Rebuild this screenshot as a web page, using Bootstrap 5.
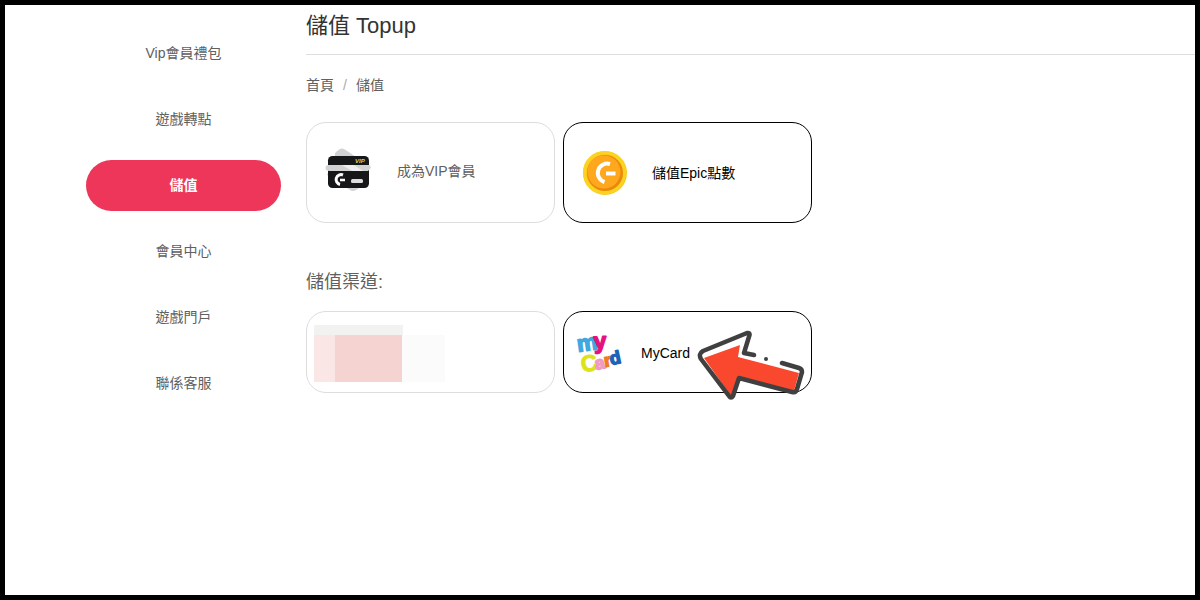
<!DOCTYPE html>
<html lang="zh-Hant">
<head>
<meta charset="utf-8">
<meta name="viewport" content="width=device-width, initial-scale=1">
<title>儲值 Topup</title>
<link href="https://cdn.jsdelivr.net/npm/bootstrap@5.3.0/dist/css/bootstrap.min.css" rel="stylesheet">
<style>
  body {
    font-family: "Liberation Sans", "Noto Sans CJK TC", sans-serif;
    font-size: 14px;
    line-height: 20px;
    color: #606060;
    border: 5px solid #000;
  }
  .page { padding-left: 81px; gap: 25px; }
  .side { width: 195px; padding-top: 23px; gap: 15px; }
  .side .nav-link {
    color: #606060;
    padding: 15px;
    height: 51px;
    line-height: 20px;
    text-align: center;
    border-radius: 26px;
  }
  .side .nav-link.active { background: #ee365a; color: #fff; font-weight: 700; }
  .page-title {
    font-size: 22px;
    line-height: 42px;
    height: 50px;
    color: #333;
    border-bottom: 1px solid #ddd;
    margin-bottom: 20px;
  }
  .breadcrumb { margin-bottom: 27px; line-height: 20px; }
  .breadcrumb a, .breadcrumb .breadcrumb-item.active { color: #606060; text-decoration: none; }
  .breadcrumb-item + .breadcrumb-item::before { color: #aaa; padding-right: 9px; }
  .breadcrumb-item + .breadcrumb-item { padding-left: 9px; }
  .options {
    display: grid;
    grid-template-columns: repeat(2, minmax(0, 1fr));
    gap: 8px;
    max-width: 506px;
  }
  .option {
    display: flex;
    align-items: center;
    position: relative;
    background: #fff;
    border: 1px solid #ddd;
    border-radius: 20px;
    color: #606060;
    padding: 0 16px;
    height: 101px;
    gap: 22px;
  }
  .option.chosen { border-color: #000; color: #000; }
  .option.channel { height: 82px; padding: 2px 12px 0; gap: 17px; }
  .option.masked { padding: 3px 7px 0; }
  .section-title { font-size: 18px; line-height: 26px; margin: 46px 0 16px; color: #606060; }
  .pointer { position: absolute; right: 1px; top: 13px; }
</style>
</head>
<body class="min-vh-100">
<div class="page d-flex">
  <nav class="side nav flex-column flex-nowrap flex-shrink-0">
    <a class="nav-link" href="#">Vip會員禮包</a>
    <a class="nav-link" href="#">遊戲轉點</a>
    <a class="nav-link active" href="#" aria-current="page">儲值</a>
    <a class="nav-link" href="#">會員中心</a>
    <a class="nav-link" href="#">遊戲門戶</a>
    <a class="nav-link" href="#">聯係客服</a>
  </nav>

  <main class="flex-grow-1">
    <h1 class="page-title fw-normal">儲值 Topup</h1>
    <ol class="breadcrumb">
      <li class="breadcrumb-item"><a href="#">首頁</a></li>
      <li class="breadcrumb-item active">儲值</li>
    </ol>

    <div class="options">
      <button type="button" class="option">
        <svg width="52" height="52" viewBox="0 0 52 52" aria-hidden="true">
          <path d="M12 9 Q11 7 13 5 L17 2 Q19 1 21 2 L44 17 V26 L38 40 L33 43 Q30 45 27 43 L4 28 Z" fill="#d2d2d2"/>
          <rect x="5" y="9" width="41" height="32" rx="4.500" fill="#161719"/>
          <path d="M5 18 H46 Q49 20 47 22 L45 24 H38 L39 24 H6 L3 23 Q2 21 3 19 Z" fill="#d2d2d2"/>
          <path d="M19 18 L29 24 H40 L31 18 Z" fill="#eee"/>
          <text x="32" y="16" font-size="6" font-weight="700" font-style="italic" fill="#d8d36b">VIP</text>
          <path d="M20 28 A5 5 0 1 0 17 37.500" fill="none" stroke="#fff" stroke-width="3"/>
          <path d="M17 33 H22" stroke="#fff" stroke-width="2.500"/>
          <rect x="28" y="32" width="12" height="4" rx="1.500" fill="#ddd"/>
        </svg>
        <span class="pb-1">成為VIP會員</span>
      </button>
      <button type="button" class="option chosen">
        <svg width="50" height="50" viewBox="0 0 50 50" aria-hidden="true">
          <circle cx="25" cy="25" r="22" fill="#fdc916"/>
          <circle cx="24.500" cy="24.500" r="20" fill="none" stroke="#fbd323" stroke-width="3"/>
          <circle cx="25" cy="25" r="18" fill="#e88a0b"/>
          <circle cx="24" cy="24" r="16.500" fill="#ffa71d"/>
          <path d="M30 16 A9 9 0 1 0 24.500 34" fill="none" stroke="#fff" stroke-width="4"/>
          <path d="M26 25.500 H35.500" stroke="#fff" stroke-width="4"/>
        </svg>
        <span>儲值Epic點數</span>
      </button>
    </div>

    <h2 class="section-title fw-normal">儲值渠道:</h2>

    <div class="options">
      <button type="button" class="option channel masked" aria-label="其他渠道">
        <svg width="131" height="58" viewBox="0 0 131 58" aria-hidden="true" shape-rendering="crispEdges">
          <rect width="89" height="10" fill="#f2f2f0"/>
          <rect y="10" width="21" height="47" fill="#f9e6e5"/>
          <rect x="21" y="10" width="67" height="47" fill="#f5d3d1"/>
          <rect x="88" y="10" width="43" height="47" fill="#fbfbfb"/>
        </svg>
      </button>
      <button type="button" class="option channel chosen">
        <svg class="overflow-visible" width="48" height="60" viewBox="0 -6 48 60" font-family="Liberation Sans, sans-serif" font-weight="700" aria-hidden="true">
          <g stroke-width="1.500" stroke-linejoin="round">
            <text transform="translate(2 23) rotate(-8)" font-size="23" fill="#40a8e0" stroke="#40a8e0">m</text>
            <text transform="translate(18 20) rotate(-3)" font-size="23" fill="#e5127d" stroke="#e5127d">y</text>
            <text transform="translate(7 44) rotate(-14)" font-size="23" fill="#dce319" stroke="#dce319" stroke-width="1">C</text>
            <text transform="translate(20 41) rotate(-12)" font-size="18" fill="#ef9bc3" stroke="#ef9bc3">a</text>
            <text transform="translate(29 38) rotate(-10)" font-size="18" fill="#ee7b24" stroke="#ee7b24">r</text>
            <text transform="translate(35 36) rotate(-12)" font-size="18" fill="#1c63b7" stroke="#1c63b7">d</text>
          </g>
        </svg>
        <span>MyCard</span>
        <svg class="pointer" width="120" height="80" viewBox="0 0 120 80" aria-hidden="true">
          <path d="M14 33 L50 20 L48 32 L109 48 L104 66 L50 52 L43 72 L40 70 Z" fill="#fa482e"/>
          <g fill="none" stroke="#404040" stroke-width="4.500" stroke-linecap="round" stroke-linejoin="round">
            <path d="M64 30 L54 28 L59.500 10 Q60 7.500 57 8 L13 26 Q8 29 11 34 L39 71 Q41 74 43 71 L49 53 L102 67 Q106 68 107 64 L112 47 Q112 44 109 43 L92 38"/>
          </g>
          <circle cx="76" cy="34" r="2" fill="#404040"/>
        </svg>
      </button>
    </div>
  </main>
</div>
<script src="https://cdn.jsdelivr.net/npm/bootstrap@5.3.0/dist/js/bootstrap.bundle.min.js"></script>
</body>
</html>
